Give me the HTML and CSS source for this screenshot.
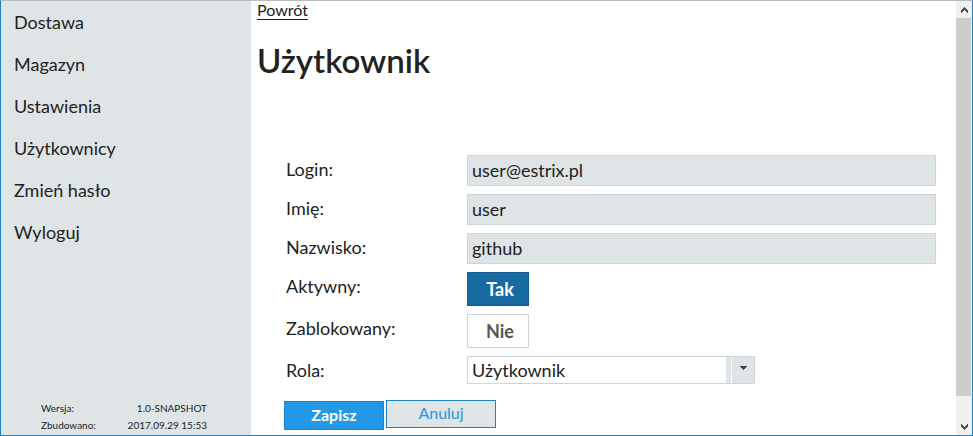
FILE: index.html
```html
<!DOCTYPE html>
<html lang="pl">
<head>
<meta charset="utf-8">
<title>Użytkownik</title>
<link rel="stylesheet" href="styles.css">
</head>
<body>
<div class="window">
  <aside class="sidebar">
    <nav class="menu">
      <a href="#">Dostawa</a>
      <a href="#">Magazyn</a>
      <a href="#">Ustawienia</a>
      <a href="#">Użytkownicy</a>
      <a href="#">Zmień hasło</a>
      <a href="#">Wyloguj</a>
    </nav>
    <dl class="build">
      <dt>Wersja:</dt><dd>1.0-SNAPSHOT</dd>
      <dt>Zbudowano:</dt><dd>2017.09.29 15:53</dd>
    </dl>
  </aside>
  <main class="content">
    <a class="back" href="#">Powrót</a>
    <h1>Użytkownik</h1>
    <form class="form">
      <div class="fields">
        <label for="login">Login:</label>
        <input class="text" id="login" type="text" value="user@estrix.pl" readonly>
        <label for="first">Imię:</label>
        <input class="text" id="first" type="text" value="user" readonly>
        <label for="last">Nazwisko:</label>
        <input class="text" id="last" type="text" value="github" readonly>
        <label for="active">Aktywny:</label>
        <button class="toggle toggle-on" id="active" type="button" aria-pressed="true">Tak</button>
        <label for="blocked">Zablokowany:</label>
        <button class="toggle" id="blocked" type="button" aria-pressed="false">Nie</button>
        <label for="role">Rola:</label>
        <div class="select">
          <select id="role"><option>Użytkownik</option></select>
          <svg class="caret" width="7" height="4" viewBox="0 0 7 4" shape-rendering="crispEdges" aria-hidden="true"><path d="M0 0h7v1H6v1H5v1H4v1H3V3H2V2H1V1H0z" fill="#444"/></svg>
        </div>
      </div>
      <div class="actions">
        <button class="save" type="submit">Zapisz</button>
        <button class="cancel" type="button">Anuluj</button>
      </div>
    </form>
  </main>
  <div class="scrollbar" aria-hidden="true">
    <svg class="arrow" width="7" height="6" viewBox="0 0 7 6" shape-rendering="crispEdges"><path d="M3 0h1v1h1v1h1v1h1v3H6V5H5V4H4V3H3v1H2v1H1v1H0V3h1V2h1V1h1z" fill="#505050"/></svg>
    <div class="track"><div class="thumb"></div></div>
    <svg class="arrow" width="7" height="6" viewBox="0 0 7 6" shape-rendering="crispEdges"><path d="M3 6h1V5h1V4h1V3h1V0H6v1H5v1H4v1H3V2H2V1H1V0H0v3h1v1h1v1h1z" fill="#505050"/></svg>
  </div>
</div>
</body>
</html>
```
FILE: styles.css
```css
* {
  box-sizing: border-box;
}

body {
  margin: 0;
  background: #fff;
  color: #222;
  font: 18px/30px Lato, "Liberation Sans", sans-serif;
}

button,
input,
select {
  margin: 0;
  border-radius: 0;
  color: inherit;
  font: inherit;
}

.window {
  display: flex;
  min-height: 100vh;
  border: 1px solid #1e82cd;
  border-top-color: #bbb;
}

.sidebar {
  display: flex;
  flex: 0 0 250px;
  flex-direction: column;
  justify-content: space-between;
  background: #dfe4e6;
}

.menu {
  display: flex;
  flex-direction: column;
}

.menu a {
  padding: 0 13px;
  color: #222;
  line-height: 42px;
  text-decoration: none;
}

.build {
  display: grid;
  grid-template-columns: auto auto;
  justify-content: space-between;
  margin: 0 44px 1px 40px;
  font-size: 10px;
  line-height: 17px;
}

.build dd {
  margin: 0;
  text-align: right;
}

.content {
  flex: 1;
  padding: 0 20px 0 6px;
}

.back {
  display: table;
  border-bottom: 1px solid #222;
  color: #222;
  font-size: 16px;
  line-height: 18px;
  text-decoration: none;
}

h1 {
  margin: 20px 0 75px;
  font-size: 33px;
  font-weight: 600;
  line-height: 40px;
}

.fields {
  display: grid;
  grid-template-columns: 181px 1fr;
  gap: 8px 0;
  align-items: start;
  margin-left: 29px;
}

.fields label {
  line-height: 28px;
}

.text {
  width: 100%;
  height: 31px;
  padding: 0 4px 2px;
  border: 1px solid #d2d4d6;
  background: #dfe4e6;
}

.toggle {
  width: 62px;
  height: 34px;
  padding: 0 0 0 4px;
  border: 1px solid #d2d4d6;
  background: #fff;
  color: #555;
  font-weight: bold;
}

.toggle-on {
  border-color: #155d91;
  background: #186ba0;
  color: #fff;
}

.select {
  position: relative;
  width: 288px;
}

.select select {
  display: block;
  width: 100%;
  height: 28px;
  padding: 0 30px 0 4px;
  border: 1px solid #d2d4d6;
  appearance: none;
  background: linear-gradient(to left, #dfe4e6 22px, #fff 22px, #fff 23px, #dfe4e6 23px, #dfe4e6 28px, #fff 28px);
  line-height: 24px;
}

.caret {
  position: absolute;
  top: 10px;
  right: 8px;
}

.actions {
  display: flex;
  gap: 2px;
  margin: 16px 0 5px 27px;
  font-size: 16px;
}

.actions button {
  padding: 0 0 2px;
  border: 1px solid #1e82cd;
  line-height: 24px;
}

.save {
  width: 100px;
  height: 29px;
  margin-top: 1px;
  background: #2398e6;
  color: #fff;
  font-weight: bold;
}

.cancel {
  width: 110px;
  height: 28px;
  background: #dfe4e6;
  color: #2398e6;
}

.scrollbar {
  display: flex;
  flex: 0 0 16px;
  flex-direction: column;
  align-items: center;
  background: #f0f0f0;
}

.arrow {
  margin: 6px 0 5px;
}

.track {
  flex: 1;
  align-self: stretch;
  padding-right: 1px;
}

.thumb {
  height: 94.5%;
  background: #cdcdcd;
}
```
